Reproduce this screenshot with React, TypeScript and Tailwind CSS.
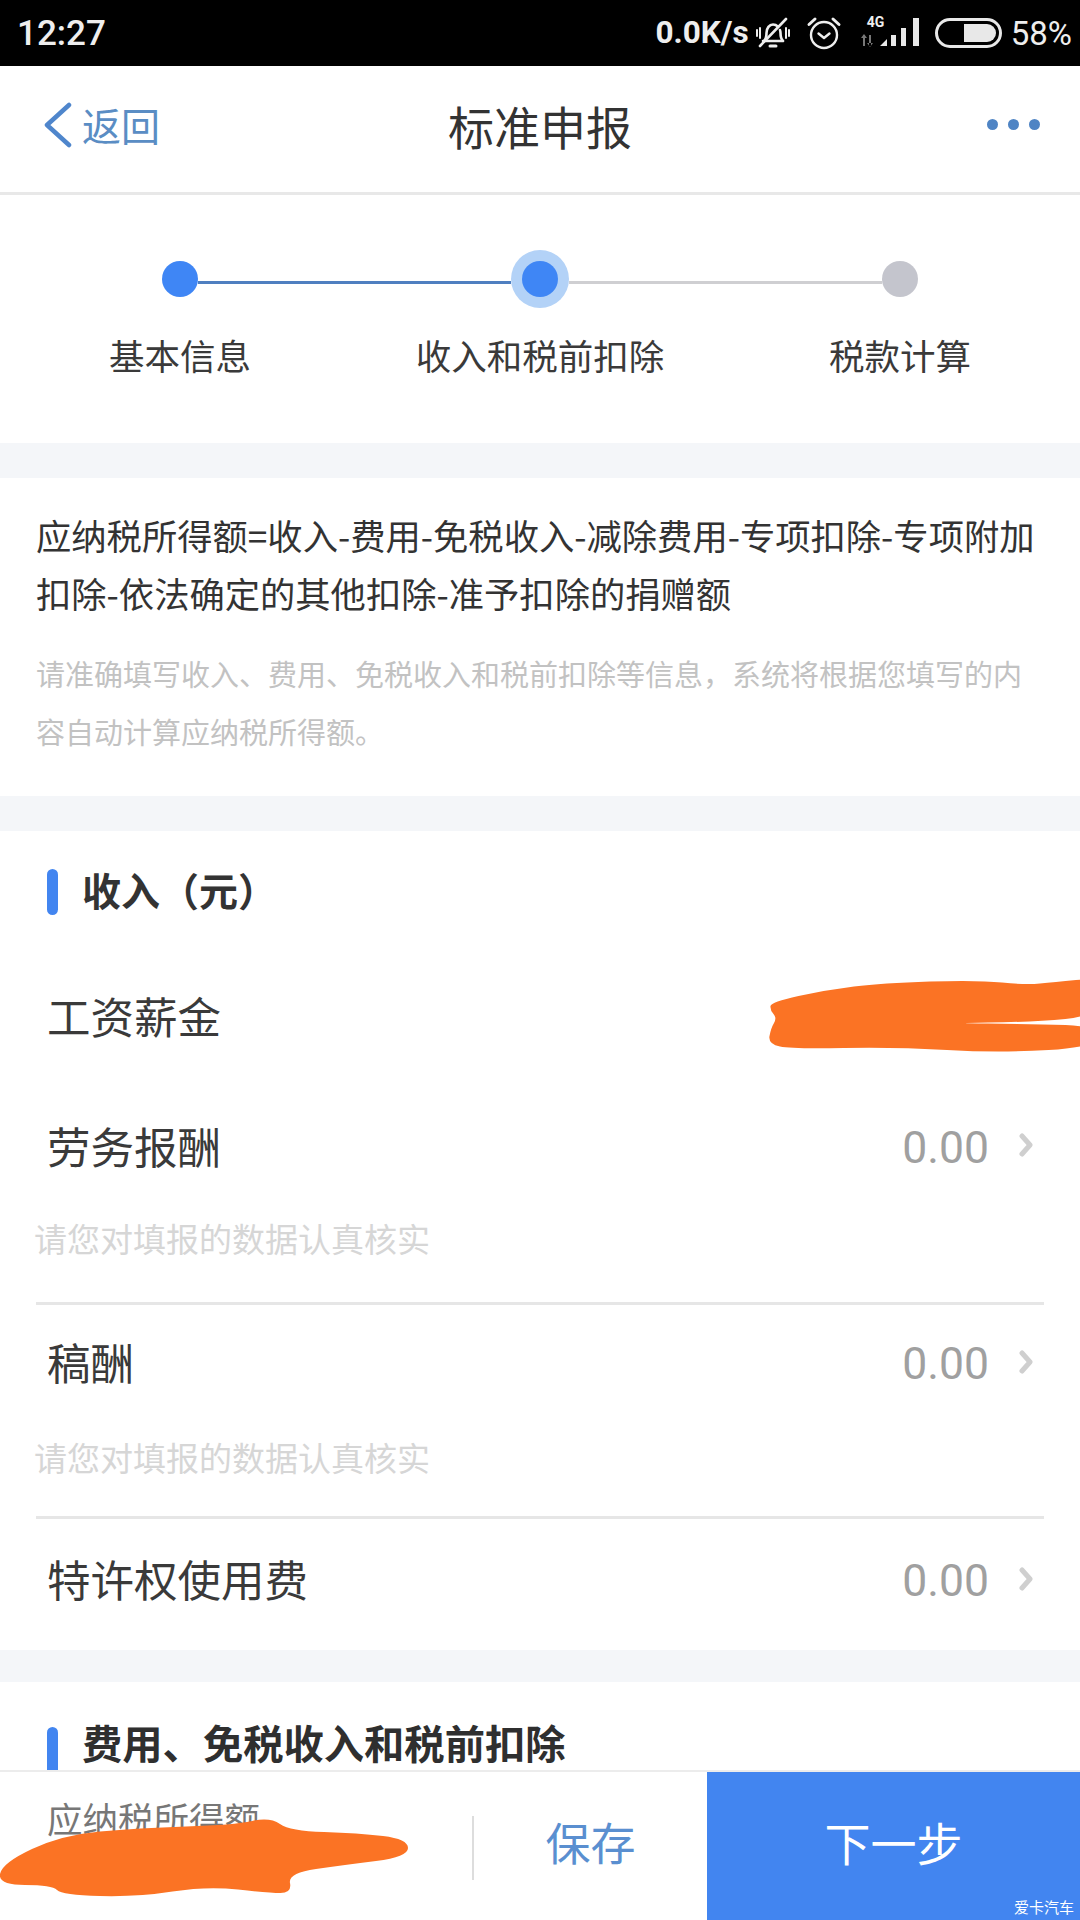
import React from "react";

const CJK = { fontFamily: '"Noto Sans CJK SC", "Noto Sans", sans-serif' };

function smooth(points: number[][]) {
  const n = points.length;
  const mid = (a: number[], b: number[]) => [(a[0] + b[0]) / 2, (a[1] + b[1]) / 2];
  const start = mid(points[n - 1], points[0]);
  let d = `M${start[0]} ${start[1]}`;
  for (let i = 0; i < n; i++) {
    const m = mid(points[i], points[(i + 1) % n]);
    d += `Q${points[i][0]} ${points[i][1]} ${m[0]} ${m[1]}`;
  }
  return d + "Z";
}

const scribbleTop = [[3, 24], [58, 12], [114, 5], [210, 2], [258, 7], [286, 4], [330, 0], [330, 38], [265, 44], [175, 45], [265, 46], [330, 48], [330, 69], [231, 75], [127, 69], [24, 71], [0, 66], [3, 50], [9, 40], [2, 32]];
const scribbleBottom = [[-10, 40], [50, 12], [126, 5], [222, 2], [258, -6], [278, 8], [346, 10], [396, 16], [396, 34], [332, 42], [276, 50], [280, 70], [257, 70], [195, 63], [126, 74], [50, 72], [40, 62], [-14, 62]];

function BellOff() {
  return (
    <svg width="36" height="36" viewBox="0 0 36 36" fill="none" stroke="#eeeeee" strokeWidth="2.6" strokeLinecap="round" strokeLinejoin="round">
      <path d="M9 26c2-2 2.500-4 2.500-8 0-5 3-8.500 6.500-8.500 2 0 3.500.7 4.800 2" />
      <path d="M25 15c.3 1 .5 2 .5 3 0 4 .5 6 2.500 8H8" />
      <path d="M15 31h6" strokeWidth="3" />
      <path d="M5 31 31 4" />
      <path d="M2 15v6M5 13v10M31 13v10M34 15v6" strokeWidth="2" />
    </svg>
  );
}

function Alarm() {
  return (
    <svg width="36" height="36" viewBox="0 0 36 36" fill="none" stroke="#eeeeee" strokeWidth="2.400" strokeLinecap="round" strokeLinejoin="round">
      <circle cx="18" cy="20" r="13" />
      <path d="M12.500 18.500 18 23l5.500-4.500" />
      <path d="M3 9.500 9 4M33 9.500 27 4" strokeWidth="3" />
    </svg>
  );
}

function Signal() {
  return (
    <svg width="62" height="32" viewBox="0 0 62 32" fill="#e8e8e8">
      <path d="M3 20h2v11H3zM1 23l3-4 3 4zM9 20h2v11H9zM7 28l3 4 3-4z" fill="#777777" />
      <path d="M20 31l7-7v7zM31 31V20h5v11zM41 31V13h5v18zM53 31V3h6v28z" />
    </svg>
  );
}

function Battery() {
  return (
    <div className="relative flex h-[30px] w-[67px] items-center justify-end rounded-[15px] border-[3px] border-[#e8e8e8] pr-[3px]">
      <div className="h-[18px] w-[32px] rounded-r-[9px] bg-[#e8e8e8]" />
    </div>
  );
}

function Chevron() {
  return (
    <svg className="mt-[-6px]" width="16" height="24" viewBox="0 0 16 24" fill="none" stroke="#cfcfcf" strokeWidth="5" strokeLinecap="round" strokeLinejoin="round">
      <path d="M4 3l8 9-8 9" />
    </svg>
  );
}

function Band({ h = "h-[35px]" }: { h?: string }) {
  return <div className={`${h} w-full shrink-0 bg-[#f4f6f9]`} />;
}

function AmountRow({ label, h }: { label: string; h: string }) {
  return (
    <div className={`flex shrink-0 items-center justify-between pl-[47px] pr-[46px] ${h}`}>
      <span className="text-[43.500px] leading-none text-[#3a3a3a]">{label}</span>
      <span className="mt-[5px] flex items-center gap-[29px]">
        <span className="text-[44.500px] leading-none text-[#a0a0a0]" style={{ fontFamily: '"Roboto", sans-serif', fontWeight: 400 }}>
          0.00
        </span>
        <Chevron />
      </span>
    </div>
  );
}

function Hint({ mb }: { mb: string }) {
  return <div className={`ml-[34px] mr-[36px] flex h-[64px] shrink-0 items-center text-[33px] leading-none text-[#d6d6d6] ${mb}`}>请您对填报的数据认真核实</div>;
}

export default function App() {
  return (
    <div className="relative flex h-[1920px] w-[1080px] flex-col overflow-hidden bg-white" style={CJK}>
      {/* status bar */}
      <div className="flex h-[66px] shrink-0 items-center justify-between bg-black pl-[17px] pr-[8px] text-[#eeeeee]" style={{ fontFamily: '"Roboto", sans-serif' }}>
        <span className="text-[35px] font-medium leading-none">12:27</span>
        <div className="flex items-center">
          <span className="text-[31.500px] font-bold leading-none">0.0K/s</span>
          <span className="ml-[6px]"><BellOff /></span>
          <span className="ml-[15px]"><Alarm /></span>
          <span className="relative ml-[18px] mt-[-4px]">
            <span className="absolute left-[7px] top-[0px] text-[14px] font-bold leading-none">4G</span>
            <Signal />
          </span>
          <span className="ml-[13px]"><Battery /></span>
          <span className="ml-[9px] text-[33px] leading-none">58%</span>
        </div>
      </div>

      {/* content */}
      <div className="flex min-h-0 flex-1 flex-col overflow-hidden">
        {/* nav */}
        <div className="grid h-[129px] shrink-0 grid-cols-3 items-center border-b-[3px] border-[#e8e8e8] px-[40px] pb-[9px]">
          <div className="ml-[4px] flex items-center gap-[10px]">
            <svg width="28" height="46" viewBox="0 0 28 46" fill="none" stroke="#4f86cc" strokeWidth="4.500" strokeLinecap="round" strokeLinejoin="round">
              <path d="M25 3 3 23l22 20" />
            </svg>
            <span className="text-[39px] leading-none text-[#5a8dc4]">返回</span>
          </div>
          <div className="text-center text-[46px] leading-none text-[#333333]">标准申报</div>
          <div className="flex justify-end gap-[10px]">
            <span className="h-[11px] w-[11px] rounded-full bg-[#4f84c4]" />
            <span className="h-[11px] w-[11px] rounded-full bg-[#4f84c4]" />
            <span className="h-[11px] w-[11px] rounded-full bg-[#4f84c4]" />
          </div>
        </div>

        {/* steps */}
        <div className="flex h-[248px] shrink-0 flex-col pt-[55px]">
          <div className="flex h-[58px] items-center px-[162px]">
            <span className="h-[36px] w-[36px] shrink-0 rounded-full bg-[#3f86f5]" />
            <span className="mt-[6px] h-[3px] flex-1 bg-[#4f7fc0]" />
            <span className="flex h-[58px] w-[58px] shrink-0 items-center justify-center rounded-full bg-[#b3d2f7]">
              <span className="h-[36px] w-[36px] rounded-full bg-[#3f86f5]" />
            </span>
            <span className="mt-[6px] h-[3px] flex-1 bg-[#cfcfd2]" />
            <span className="h-[36px] w-[36px] shrink-0 rounded-full bg-[#c4c5cd]" />
          </div>
          <div className="mt-[23px] grid grid-cols-3 text-center text-[35.500px] leading-[48px] text-[#3a3a3a]">
            <span>基本信息</span>
            <span>收入和税前扣除</span>
            <span>税款计算</span>
          </div>
        </div>

        <Band />

        {/* formula */}
        <div className="flex h-[318px] shrink-0 flex-col px-[36px] pt-[28px]">
          <div className="text-[35.300px] leading-[58px] text-[#333333]">
            <div className="whitespace-nowrap">应纳税所得额=收入-费用-免税收入-减除费用-专项扣除-专项附加</div>
            <div className="whitespace-nowrap">扣除-依法确定的其他扣除-准予扣除的捐赠额</div>
          </div>
          <div className="mt-[22px] text-[29px] leading-[58px] text-[#c2c2c2]">
            <div className="whitespace-nowrap">请准确填写收入、费用、免税收入和税前扣除等信息，系统将根据您填写的内</div>
            <div className="whitespace-nowrap">容自动计算应纳税所得额。</div>
          </div>
        </div>

        <Band />

        {/* income */}
        <div className="flex h-[819px] shrink-0 flex-col">
          <div className="flex h-[120px] shrink-0 items-center pl-[47px]">
            <span className="mt-[2px] h-[46px] w-[11px] rounded-full bg-[#4285f0]" />
            <span className="mb-[4px] ml-[24px] text-[39px] font-bold leading-none text-[#333333]">收入（元）</span>
          </div>
          <div className="relative flex h-[134px] shrink-0 items-center pb-[4px] pl-[47px]">
            <span className="text-[43.500px] leading-none text-[#3a3a3a]">工资薪金</span>
            {/* redaction scribble */}
            <svg className="absolute right-0 top-[27px]" width="312" height="76" viewBox="0 0 312 76" fill="#fb7324">
              <path d={smooth(scribbleTop)} />
            </svg>
          </div>
          <AmountRow label="劳务报酬" h="h-[121px]" />
          <Hint mb="mb-[32px]" />
          <div className="mx-[36px] h-[3px] shrink-0 bg-[#e6e6e6]" />
          <AmountRow label="稿酬" h="h-[120px] pb-[6px]" />
          <Hint mb="mb-[27px]" />
          <div className="mx-[36px] h-[3px] shrink-0 bg-[#e6e6e6]" />
          <AmountRow label="特许权使用费" h="h-[131px] pb-[11px]" />
        </div>

        <Band h="h-[32px]" />

        {/* next section */}
        <div className="flex min-h-0 flex-1 items-start pl-[47px] pt-[45px]">
          <span className="h-[60px] w-[11px] rounded-t-full bg-[#4285f0]" />
          <span className="ml-[24px] mt-[-8px] whitespace-nowrap text-[40.300px] font-bold leading-[46px] text-[#2f2f2f]">费用、免税收入和税前扣除</span>
        </div>
      </div>

      {/* bottom bar */}
      <div className="relative z-10 flex h-[150px] shrink-0 items-stretch border-t-[2px] border-[#ececec] bg-white">
        <div className="flex w-[472px] flex-col pl-[47px] pt-[24px]">
          <span className="text-[35.500px] leading-[44px] text-[#777777]">应纳税所得额</span>
        </div>
        <div className="mt-[44px] h-[64px] w-[2px] bg-[#dddddd]" />
        <div className="flex w-[233px] items-center justify-center pb-[10px] text-[45px] leading-none text-[#5a8fd0]">保存</div>
        <div className="relative flex flex-1 items-center justify-center bg-[#4285f0] pb-[10px] text-[46px] leading-none text-white">
          下一步
          <span className="absolute bottom-[6px] right-[6px] text-[15px] leading-none text-white">爱卡汽车</span>
        </div>
        {/* redaction scribble */}
        <svg className="absolute left-[12px] top-[51px] overflow-visible" width="388" height="72" viewBox="0 0 388 72" fill="#fb7324">
          <path d={smooth(scribbleBottom)} />
        </svg>
      </div>
    </div>
  );
}
